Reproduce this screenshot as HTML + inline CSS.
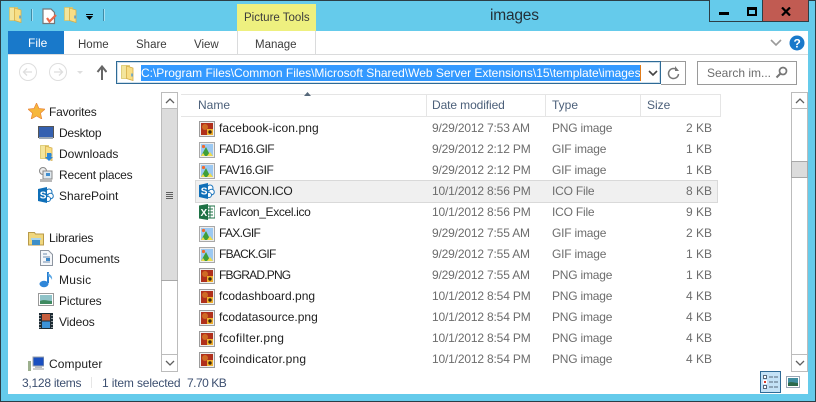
<!DOCTYPE html>
<html><head><meta charset="utf-8">
<style>
html,body{margin:0;padding:0}
#w{position:relative;width:816px;height:402px;overflow:hidden;background:#65cbeb;font-family:"Liberation Sans",sans-serif;font-size:12px;color:#1e1e1e}
#w div,#w svg{position:absolute}
.t{white-space:nowrap;line-height:16px;height:16px}
.g{color:#6d6d6d}
.h{color:#4c607a}
.l{background:#e5e5e5}
.d{letter-spacing:-.17px}
.c{letter-spacing:-.2px}
</style></head><body>
<div id="w">
<svg width="0" height="0" style="left:0;top:0">
<defs>
<symbol id="folder" viewBox="0 0 16 16"><path d="M1.500 .5h8v13h-8z" fill="#f3e59c" stroke="#d9c566" stroke-width=".8"/><path d="M6.500 1l6.500 2v12.500l-6.500-2z" fill="#f8de85" stroke="#d5ad48" stroke-width=".8"/><rect x="11.300" y="8.500" width="1.400" height="3" fill="#4a9be0"/></symbol>
<symbol id="png" viewBox="0 0 16 16"><rect x=".5" y=".5" width="15" height="15" fill="#eee" stroke="#9c9c9c"/><rect x="2" y="2" width="12" height="12" fill="#b0301c"/><circle cx="6" cy="6" r="3" fill="#cf6a24"/><rect x="8" y="8" width="6" height="6" fill="#f2b02c"/><circle cx="11" cy="11" r="1.700" fill="#3a2a10"/></symbol>
<symbol id="gif" viewBox="0 0 16 16"><rect x=".5" y=".5" width="15" height="15" fill="#eee" stroke="#a8a8a8"/><rect x="2" y="2" width="12" height="12" fill="#9cc9f2"/><path d="M2 14l5-9 4.500 9z" fill="#3f9e3a"/><path d="M8 14l3-4 3 4z" fill="#efdc4a"/><path d="M2 14l2-3 2 3z" fill="#efdc4a"/><circle cx="4.500" cy="4.500" r="1.600" fill="#f06a30"/></symbol>
<symbol id="sp" viewBox="0 0 16 16"><circle cx="11" cy="5" r="3" fill="#fff" stroke="#1c75bc"/><circle cx="12.500" cy="9" r="2.800" fill="#fff" stroke="#1c75bc"/><circle cx="10" cy="12" r="2.500" fill="#fff" stroke="#1c75bc"/><path d="M0 2l9-2v16l-9-2z" fill="#0f6fb8"/><text x="1.800" y="11.500" font-family="Liberation Sans" font-weight="bold" font-size="10" fill="#fff">S</text></symbol>
</defs>
</svg>

<!-- window outline -->
<div style="left:0;top:0;width:816px;height:1px;background:#2c3e46"></div>
<div style="left:0;top:0;width:1px;height:402px;background:#2c3e46"></div>
<div style="left:815px;top:0;width:1px;height:402px;background:#2c3e46"></div>
<div style="left:0;top:401px;width:816px;height:1px;background:#2c3e46"></div>

<!-- quick access -->
<svg style="left:8px;top:7px" width="16" height="16"><use href="#folder"/></svg>
<div style="left:31px;top:9px;width:1px;height:12px;background:#3f8ba6;box-shadow:1px 0 0 #a6e0f2"></div>
<svg style="left:42px;top:8px" width="16" height="17" viewBox="0 0 16 17"><path d="M1 1h8l3.500 3.500V15.500H1z" fill="#fff" stroke="#777" stroke-width="1.200"/><path d="M5 10l2.500 3.500L14 7" fill="none" stroke="#e8694a" stroke-width="2.200"/></svg>
<svg style="left:63px;top:7px" width="16" height="16"><use href="#folder"/></svg>
<div style="left:86px;top:14px;width:7px;height:1px;background:#000"></div>
<svg style="left:86px;top:16px" width="8" height="5"><path d="M0 0h7L3.500 4z" fill="#000"/></svg>
<div style="left:103px;top:9px;width:1px;height:12px;background:#3f8ba6;box-shadow:1px 0 0 #a6e0f2"></div>

<!-- title -->
<div class="t" style="left:490px;top:6px;font-size:15.500px;line-height:20px;height:20px;color:#243038;letter-spacing:-.2px">images</div>

<!-- caption buttons -->
<div style="left:709px;top:0;width:27px;height:21px;border:1px solid #2c3e46;border-top:0;background:#65cbeb"></div>
<div style="left:737px;top:0;width:25px;height:21px;border:1px solid #2c3e46;border-top:0;border-left:0;background:#65cbeb"></div>
<div style="left:763px;top:0;width:45px;height:21px;background:#c15b52;border-bottom:1px solid #2c3e46;border-right:1px solid #2c3e46"></div>
<div style="left:719px;top:12px;width:10px;height:3px;background:#000"></div>
<div style="left:747px;top:7px;width:6px;height:4px;border:2px solid #000;border-top-width:3px"></div>
<svg style="left:781px;top:7px" width="10" height="9"><path d="M1 .5l8 8M9 .5l-8 8" stroke="#000" stroke-width="2.200"/></svg>

<!-- ribbon -->
<div style="left:8px;top:31px;width:800px;height:363px;background:#fff"></div>
<div style="left:8px;top:31px;width:56px;height:23px;background:#1979ca"></div>
<div class="t" style="left:28px;top:35px;color:#fff">File</div>
<div class="t" style="left:78px;top:37px;color:#3c3c3c;font-size:11.500px">Home</div>
<div class="t" style="left:136px;top:37px;color:#3c3c3c;font-size:11.500px">Share</div>
<div class="t" style="left:194px;top:37px;color:#3c3c3c;font-size:11.500px">View</div>
<div class="t" style="left:255px;top:37px;color:#3c3c3c;font-size:11.500px">Manage</div>
<div style="left:237px;top:4px;width:79px;height:27px;background:#eef07f"></div>
<div class="t" style="left:244px;top:10px;color:#3c3c3c;font-size:11.500px">Picture Tools</div>
<div style="left:237px;top:31px;width:1px;height:23px;background:#dadbdc"></div>
<div style="left:315px;top:31px;width:1px;height:23px;background:#dadbdc"></div>
<div style="left:8px;top:54px;width:800px;height:1px;background:#dadbdc"></div>
<svg style="left:770px;top:39px" width="12" height="8"><path d="M1 1l5 5 5-5" fill="none" stroke="#9a9a9a" stroke-width="1.600"/></svg>
<svg style="left:789px;top:35px" width="16" height="16"><circle cx="8" cy="8" r="7.500" fill="#1979ca"/><text x="4.500" y="12.500" font-family="Liberation Sans" font-weight="bold" font-size="12" fill="#fff">?</text></svg>

<!-- nav buttons -->
<svg style="left:17px;top:63px" width="90" height="20" viewBox="0 0 90 20">
<circle cx="11" cy="9" r="8.500" fill="none" stroke="#dedede"/><path d="M15 9H7m3-3.500L6.500 9l3.500 3.500" fill="none" stroke="#dedede" stroke-width="1.300"/>
<circle cx="41" cy="9" r="8.500" fill="none" stroke="#dedede"/><path d="M37 9h8m-3-3.500L45.500 9 42 12.500" fill="none" stroke="#dedede" stroke-width="1.300"/>
<path d="M60 8h6l-3 3z" fill="#dedede"/>
<path d="M86 18V6m-4.500 4L86 4.500 90.500 10" fill="none" stroke="#666" stroke-width="2" transform="translate(-1,-1)"/>
</svg>

<!-- address bar -->
<div style="left:116px;top:61px;width:543px;height:21px;border:1px solid #2e6a96;box-shadow:inset 0 0 0 1px #cfe0ec;background:#fff"></div>
<svg style="left:120px;top:65px" width="16" height="16"><use href="#folder"/></svg>
<div class="t" style="left:141px;top:65px;width:499px;height:16px;background:#3399ff"></div>
<div class="t" id="addr" style="left:141px;top:65px;width:499px;overflow:hidden;color:#fff;font-size:12px;letter-spacing:-.02px">C:\Program Files\Common Files\Microsoft Shared\Web Server Extensions\15\template\images</div>
<div style="left:640px;top:65px;width:1px;height:16px;background:#e07b1a"></div>
<svg style="left:648px;top:70px" width="10" height="7"><path d="M1 1l4 4 4-4" fill="none" stroke="#444" stroke-width="1.600"/></svg>
<div style="left:661px;top:61px;width:24px;height:22px;border:1px solid #9a9a9a;border-left:0"></div>
<svg style="left:667px;top:66px" width="13" height="14" viewBox="0 0 13 14"><path d="M10.500 4.500A5 5 0 1 0 11.500 8" fill="none" stroke="#777" stroke-width="1.500"/><path d="M7 0v5h4z" fill="#777" transform="translate(1,0)"/></svg>
<div style="left:697px;top:61px;width:98px;height:22px;border:1px solid #9a9a9a"></div>
<div class="t" style="left:707px;top:65px;color:#6d6d6d">Search im...</div>
<svg style="left:775px;top:66px" width="13" height="13"><circle cx="8" cy="5" r="3.500" fill="none" stroke="#777" stroke-width="1.700"/><path d="M5.500 7.500L1.500 11.500" stroke="#777" stroke-width="2"/></svg>

<!-- nav pane -->
<svg style="left:28px;top:103px" width="17" height="16"><path d="M8.500 0l2.500 5.500 6 .6-4.500 4 1.300 5.900-5.300-3-5.300 3 1.300-5.900L0 6.100l6-.6z" fill="#f6b73c" stroke="#e9853a" stroke-width=".7"/></svg>
<div class="t" style="left:49px;top:104px;letter-spacing:-.2px">Favorites</div>
<svg style="left:38px;top:126px" width="16" height="14"><rect x=".5" y=".5" width="15" height="11" fill="#3460b0" stroke="#555"/><rect x="1" y="11" width="14" height="2" fill="#9aa6b4"/></svg>
<div class="t" style="left:59px;top:125px;letter-spacing:-.25px">Desktop</div>
<svg style="left:39px;top:145px" width="16" height="16"><use href="#folder"/><path d="M8 8h4v4h2l-4 4-4-4h2z" fill="#2a86d8"/></svg>
<div class="t" style="left:59px;top:146px">Downloads</div>
<svg style="left:38px;top:167px" width="16" height="16"><circle cx="5" cy="4" r="3.500" fill="#eee" stroke="#888"/><rect x="5" y="4" width="9" height="8" fill="#dfe8ee" stroke="#888"/><rect x="8" y="6" width="4" height="3" fill="#3f8ed0"/><rect x="2" y="12" width="12" height="3" fill="#b8b8b8"/></svg>
<div class="t" style="left:59px;top:167px;letter-spacing:-.2px">Recent places</div>
<svg style="left:38px;top:187px" width="16" height="16"><use href="#sp"/></svg>
<div class="t" style="left:59px;top:188px">SharePoint</div>
<svg style="left:28px;top:231px" width="16" height="15" viewBox="0 0 16 15"><path d="M.5 1.500h6l1 1.500h8v11H.5z" fill="#f0d77e" stroke="#b89a4a"/><rect x="4" y="8" width="8" height="6" fill="#3c8ec8"/><rect x="3" y="7" width="10" height="2" fill="#a9d4ee"/></svg>
<div class="t" style="left:49px;top:230px;letter-spacing:-.2px">Libraries</div>
<svg style="left:40px;top:250px" width="13" height="16"><path d="M.5.500h8l4 4v11H.5z" fill="#f4f6f9" stroke="#8d95a0"/><path d="M3 4h4M3 7h7M3 12h7" stroke="#6f8fb0"/><rect x="6" y="8" width="4" height="3" fill="#3a87c8"/></svg>
<div class="t" style="left:59px;top:251px">Documents</div>
<svg style="left:39px;top:271px" width="15" height="17"><path d="M9 1v11" stroke="#2a7fd0" stroke-width="2"/><ellipse cx="5" cy="13" rx="4.500" ry="3.200" fill="#2f86d8"/><path d="M9 1c1 3 5 3 4 8-1-3-3-3-4-4z" fill="#5aa6e4"/></svg>
<div class="t" style="left:59px;top:272px;letter-spacing:.2px">Music</div>
<svg style="left:38px;top:293px" width="16" height="14"><rect x=".5" y=".5" width="15" height="12" fill="#fff" stroke="#999"/><rect x="2" y="2" width="12" height="9" fill="#8fc3c8"/><path d="M2 11V8c4-2 8 0 12 0v3z" fill="#3f8a60"/></svg>
<div class="t" style="left:59px;top:293px;letter-spacing:-.1px">Pictures</div>
<svg style="left:39px;top:313px" width="14" height="16"><rect width="14" height="16" fill="#1d2b33"/><rect x="3" y="1" width="8" height="6.500" fill="#c65f3f"/><rect x="3" y="8.500" width="8" height="6.500" fill="#3c93d8"/><path d="M1 2v1M1 5v1M1 8v1M1 11v1M1 14v1M13 2v1M13 5v1M13 8v1M13 11v1M13 14v1" stroke="#fff"/></svg>
<div class="t" style="left:59px;top:314px;letter-spacing:-.15px">Videos</div>
<svg style="left:28px;top:356px" width="16" height="15"><rect x="5" y="1" width="11" height="9" fill="#1a4fc0" stroke="#9aa0a8"/><rect x="7" y="10" width="7" height="2" fill="#b8bcc2"/><rect x="5" y="12" width="11" height="2" fill="#ccc"/><rect x="0" y="5" width="3" height="10" fill="#9db08e"/></svg>
<div class="t" style="left:49px;top:356px;letter-spacing:.1px">Computer</div>

<!-- nav scrollbar -->
<div style="left:161px;top:92px;width:15px;height:278px;border:1px solid #bcbcbc;background:#fff"></div>
<div style="left:161px;top:108px;width:17px;height:1px;background:#bcbcbc"></div>
<div style="left:162px;top:109px;width:15px;height:171px;background:#dcdcdc"></div>
<div style="left:161px;top:280px;width:17px;height:1px;background:#a8a8a8"></div>
<div style="left:161px;top:354px;width:17px;height:1px;background:#bcbcbc"></div>
<svg style="left:165px;top:98px" width="10" height="6"><path d="M1 5l4-4 4 4" fill="none" stroke="#606060" stroke-width="1.300"/></svg>
<svg style="left:165px;top:360px" width="10" height="6"><path d="M1 1l4 4 4-4" fill="none" stroke="#606060" stroke-width="1.300"/></svg>
<div style="left:166px;top:192px;width:7px;height:1px;background:#606060;box-shadow:0 1px 0 #dcdcdc,0 2px 0 #606060,0 3px 0 #dcdcdc,0 4px 0 #606060,0 5px 0 #dcdcdc,0 6px 0 #606060"></div>

<!-- headers -->
<div class="l" style="left:181px;top:94px;width:540px;height:1px"></div>
<div class="l" style="left:181px;top:116px;width:540px;height:1px"></div>
<div class="l" style="left:426px;top:94px;width:1px;height:23px"></div>
<div class="l" style="left:545px;top:94px;width:1px;height:23px"></div>
<div class="l" style="left:640px;top:94px;width:1px;height:23px"></div>
<div class="l" style="left:720px;top:94px;width:1px;height:23px"></div>
<svg style="left:304px;top:92px" width="8" height="5"><path d="M0 4h7L3.500 0z" fill="#56687a"/></svg>
<div class="t h" style="left:198px;top:97px">Name</div>
<div class="t h" style="left:432px;top:97px;letter-spacing:-.1px">Date modified</div>
<div class="t h" style="left:552px;top:97px">Type</div>
<div class="t h" style="left:647px;top:97px">Size</div>

<!-- selected row -->
<div style="left:195px;top:180px;width:521px;height:21px;background:#f0f0f0;border:1px solid #d9d9d9"></div>

<!-- rows -->
<svg style="left:199px;top:121px" width="16" height="16"><use href="#png"/></svg>
<div class="t" style="left:219px;top:120px;letter-spacing:.1px">facebook-icon.png</div>
<div class="t g d" style="left:432px;top:120px">9/29/2012 7:53 AM</div>
<div class="t g c" style="left:552px;top:120px">PNG image</div>
<div class="t g" style="left:672px;top:120px;width:40px;text-align:right">2 KB</div>

<svg style="left:199px;top:142px" width="16" height="16"><use href="#gif"/></svg>
<div class="t" style="left:219px;top:141px;letter-spacing:-.55px">FAD16.GIF</div>
<div class="t g d" style="left:432px;top:141px">9/29/2012 2:12 PM</div>
<div class="t g c" style="left:552px;top:141px">GIF image</div>
<div class="t g" style="left:672px;top:141px;width:40px;text-align:right">1 KB</div>

<svg style="left:199px;top:163px" width="16" height="16"><use href="#gif"/></svg>
<div class="t" style="left:219px;top:162px;letter-spacing:-.45px">FAV16.GIF</div>
<div class="t g d" style="left:432px;top:162px">9/29/2012 2:12 PM</div>
<div class="t g c" style="left:552px;top:162px">GIF image</div>
<div class="t g" style="left:672px;top:162px;width:40px;text-align:right">1 KB</div>

<svg style="left:199px;top:183px" width="16" height="16"><use href="#sp"/></svg>
<div class="t" style="left:219px;top:183px;letter-spacing:-.27px">FAVICON.ICO</div>
<div class="t g d" style="left:432px;top:183px">10/1/2012 8:56 PM</div>
<div class="t g c" style="left:552px;top:183px">ICO File</div>
<div class="t g" style="left:672px;top:183px;width:40px;text-align:right">8 KB</div>

<svg style="left:199px;top:204px" width="16" height="16"><rect x="6" y="2" width="10" height="12" fill="#fff" stroke="#1e7145"/><path d="M8 5h6M8 8h6M8 11h6M11 2v12" stroke="#1e7145"/><path d="M0 1.500L9 0v16l-9-1.500z" fill="#1e7145"/><text x="1.500" y="12" font-family="Liberation Sans" font-weight="bold" font-size="10" fill="#fff">X</text></svg>
<div class="t" style="left:219px;top:204px;letter-spacing:-.35px">FavIcon_Excel.ico</div>
<div class="t g d" style="left:432px;top:204px">10/1/2012 8:56 PM</div>
<div class="t g c" style="left:552px;top:204px">ICO File</div>
<div class="t g" style="left:672px;top:204px;width:40px;text-align:right">9 KB</div>

<svg style="left:199px;top:226px" width="16" height="16"><use href="#gif"/></svg>
<div class="t" style="left:219px;top:225px;letter-spacing:-.7px">FAX.GIF</div>
<div class="t g d" style="left:432px;top:225px">9/29/2012 7:55 AM</div>
<div class="t g c" style="left:552px;top:225px">GIF image</div>
<div class="t g" style="left:672px;top:225px;width:40px;text-align:right">2 KB</div>

<svg style="left:199px;top:247px" width="16" height="16"><use href="#gif"/></svg>
<div class="t" style="left:219px;top:246px;letter-spacing:-.75px">FBACK.GIF</div>
<div class="t g d" style="left:432px;top:246px">9/29/2012 7:55 AM</div>
<div class="t g c" style="left:552px;top:246px">GIF image</div>
<div class="t g" style="left:672px;top:246px;width:40px;text-align:right">1 KB</div>

<svg style="left:199px;top:268px" width="16" height="16"><use href="#png"/></svg>
<div class="t" style="left:219px;top:267px;letter-spacing:-.8px">FBGRAD.PNG</div>
<div class="t g d" style="left:432px;top:267px">9/29/2012 7:55 AM</div>
<div class="t g c" style="left:552px;top:267px">PNG image</div>
<div class="t g" style="left:672px;top:267px;width:40px;text-align:right">1 KB</div>

<svg style="left:199px;top:289px" width="16" height="16"><use href="#png"/></svg>
<div class="t" style="left:219px;top:288px">fcodashboard.png</div>
<div class="t g d" style="left:432px;top:288px">10/1/2012 8:54 PM</div>
<div class="t g c" style="left:552px;top:288px">PNG image</div>
<div class="t g" style="left:672px;top:288px;width:40px;text-align:right">4 KB</div>

<svg style="left:199px;top:310px" width="16" height="16"><use href="#png"/></svg>
<div class="t" style="left:219px;top:309px">fcodatasource.png</div>
<div class="t g d" style="left:432px;top:309px">10/1/2012 8:54 PM</div>
<div class="t g c" style="left:552px;top:309px">PNG image</div>
<div class="t g" style="left:672px;top:309px;width:40px;text-align:right">4 KB</div>

<svg style="left:199px;top:331px" width="16" height="16"><use href="#png"/></svg>
<div class="t" style="left:219px;top:330px;letter-spacing:.3px">fcofilter.png</div>
<div class="t g d" style="left:432px;top:330px">10/1/2012 8:54 PM</div>
<div class="t g c" style="left:552px;top:330px">PNG image</div>
<div class="t g" style="left:672px;top:330px;width:40px;text-align:right">4 KB</div>

<svg style="left:199px;top:352px" width="16" height="16"><use href="#png"/></svg>
<div class="t" style="left:219px;top:351px;letter-spacing:.2px">fcoindicator.png</div>
<div class="t g d" style="left:432px;top:351px">10/1/2012 8:54 PM</div>
<div class="t g c" style="left:552px;top:351px">PNG image</div>
<div class="t g" style="left:672px;top:351px;width:40px;text-align:right">4 KB</div>

<!-- main scrollbar -->
<div style="left:791px;top:92px;width:15px;height:278px;border:1px solid #bcbcbc;background:#fff"></div>
<div style="left:791px;top:108px;width:17px;height:1px;background:#bcbcbc"></div>
<div style="left:791px;top:161px;width:15px;height:15px;background:#dcdcdc;border:1px solid #a8a8a8"></div>
<div style="left:791px;top:354px;width:17px;height:1px;background:#bcbcbc"></div>
<svg style="left:795px;top:98px" width="10" height="6"><path d="M1 5l4-4 4 4" fill="none" stroke="#606060" stroke-width="1.300"/></svg>
<svg style="left:795px;top:360px" width="10" height="6"><path d="M1 1l4 4 4-4" fill="none" stroke="#606060" stroke-width="1.300"/></svg>

<!-- status bar -->
<div class="t h" style="left:22px;top:375px;color:#3c4f70;letter-spacing:-.25px">3,128 items</div>
<div style="left:91px;top:377px;width:1px;height:11px;background:#e6e6e6"></div>
<div class="t h" style="left:102px;top:375px;color:#3c4f70;letter-spacing:-.15px">1 item selected</div>
<div class="t h" style="left:187px;top:375px;color:#3c4f70;letter-spacing:-.5px">7.70 KB</div>
<div style="left:760px;top:371px;width:19px;height:20px;background:#c4e2f6;border:1px solid #2e6a96"></div>
<svg style="left:763px;top:375px" width="17" height="14"><rect x=".5" y=".5" width="3" height="3" fill="#fff" stroke="#56687a"/><rect x=".5" y="5.500" width="3" height="3" fill="#d83a2a" stroke="#fff"/><rect x=".5" y="10.500" width="3" height="3" fill="#fff" stroke="#56687a"/><path d="M6 2h4M11 2h4M6 7h4M11 7h4M6 12h4M11 12h4" stroke="#56687a"/></svg>
<svg style="left:786px;top:376px" width="14" height="12"><rect x=".5" y=".5" width="13" height="11" fill="#fff" stroke="#9aa6b4"/><rect x="2" y="2" width="10" height="8" fill="#3f8ea0"/><path d="M2 10V7c3-2 7 0 10 0v3z" fill="#2d6a4a"/></svg>
</div>
</body></html>
